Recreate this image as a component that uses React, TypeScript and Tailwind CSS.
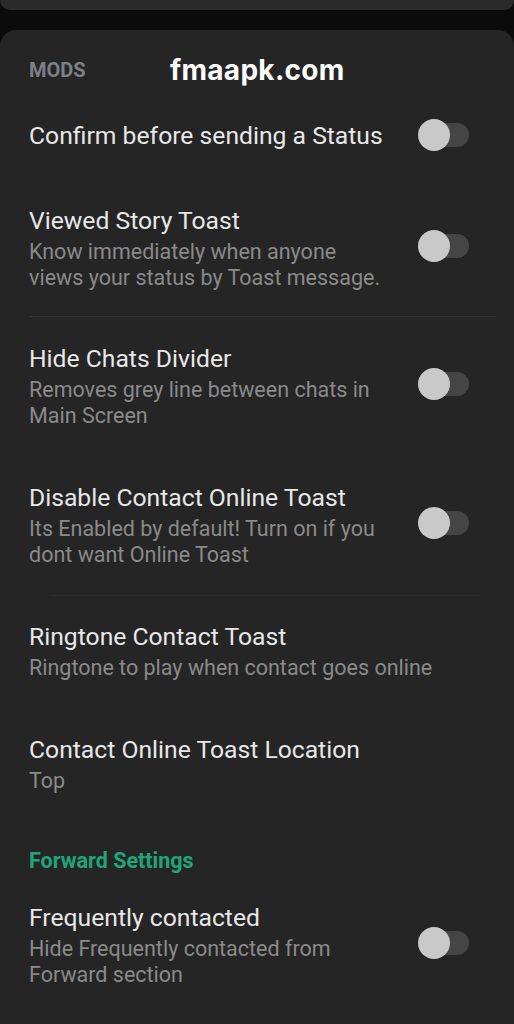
import { ReactNode } from 'react'

type Row = {
  title: string
  desc?: ReactNode
  toggle?: boolean
}

function Toggle({ raised }: { raised?: boolean }) {
  return (
    <div className={`relative w-[51px] h-[32px] flex-shrink-0 flex items-center ${raised ? '-top-[3px]' : '-top-px'}`}>
      <div className="absolute left-[12px] right-0 h-[24px] rounded-full bg-[#454545]" />
      <div className="absolute left-0 w-[32px] h-[32px] rounded-full bg-[#c9c9c9]" />
    </div>
  )
}

function SettingRow({ title, desc, toggle }: Row) {
  return (
    <div className="flex items-center pl-[29px] pr-[45px] py-[27px]">
      <div className="flex-1 min-w-0 whitespace-nowrap">
        <div className="text-[24.7px] leading-[30px] text-[#e8e8e8]">{title}</div>
        {desc && (
          <div className="mt-[3px] text-[21.5px] leading-[26px] text-[#8a8a8a]">{desc}</div>
        )}
      </div>
      {toggle && <Toggle raised={!!desc} />}
    </div>
  )
}

export default function App() {
  return (
    <div className="w-[514px] h-[1024px] overflow-hidden bg-[#0b0b0b] font-['Roboto','Liberation_Sans',sans-serif]">
      {/* top sheet edge */}
      <div className="h-[10px] bg-[#2a2a2a] rounded-b-[10px]" />
      <div className="h-[20px]" />

      {/* settings panel */}
      <div className="h-[994px] bg-[#252525] rounded-t-[16px]">
        <div className="flex items-center pt-[28px] pl-[29px]">
          <span className="w-[141px] text-[20px] leading-[24px] font-bold text-[#7b8086]">MODS</span>
          <span className="text-[28px] leading-[24px] font-bold text-white font-['Inter','Liberation_Sans',sans-serif] tracking-[0.3px]">fmaapk.com</span>
        </div>

        <div className="mt-[11px]">
          <SettingRow title="Confirm before sending a Status" toggle />
          <SettingRow
            title="Viewed Story Toast"
            desc={<>Know immediately when anyone<br />views your status by Toast message.</>}
            toggle
          />
        </div>

        <div className="-mt-[2px] ml-[29px] mr-[18px] h-px bg-[#333333]" />

        <div>
          <SettingRow
            title="Hide Chats Divider"
            desc={<>Removes grey line between chats in<br />Main Screen</>}
            toggle
          />
          <SettingRow
            title="Disable Contact Online Toast"
            desc={<>Its Enabled by default! Turn on if you<br />dont want Online Toast</>}
            toggle
          />
        </div>

        <div className="ml-[50px] mr-[34px] h-px bg-[#2c2c2c]" />

        <div className="-mt-[1px]">
          <SettingRow title="Ringtone Contact Toast" desc="Ringtone to play when contact goes online" />
          <SettingRow title="Contact Online Toast Location" desc="Top" />
        </div>

        <div className="pl-[29px] pt-[28px] text-[21.5px] leading-[24px] font-bold text-[#1fa57a]">
          Forward Settings
        </div>

        <div className="mt-[3px]">
          <SettingRow
            title="Frequently contacted"
            desc={<>Hide Frequently contacted from<br />Forward section</>}
            toggle
          />
        </div>
      </div>
    </div>
  )
}
